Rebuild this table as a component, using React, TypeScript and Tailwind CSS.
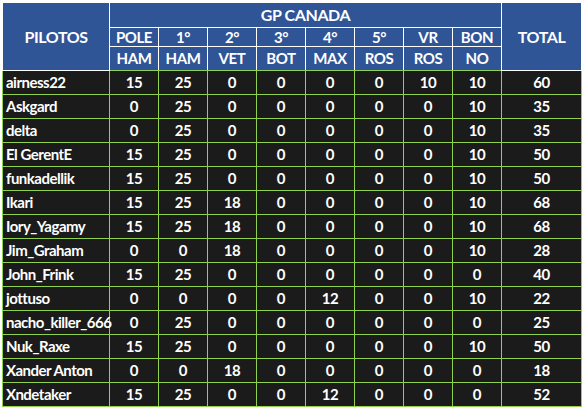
const subs = [
  ['POLE', 'HAM'],
  ['1°', 'HAM'],
  ['2°', 'VET'],
  ['3°', 'BOT'],
  ['4°', 'MAX'],
  ['5°', 'ROS'],
  ['VR', 'ROS'],
  ['BON', 'NO'],
]

const rows: [string, number[], number][] = [
  ['airness22', [15, 25, 0, 0, 0, 0, 10, 10], 60],
  ['Askgard', [0, 25, 0, 0, 0, 0, 0, 10], 35],
  ['delta', [0, 25, 0, 0, 0, 0, 0, 10], 35],
  ['El GerentE', [15, 25, 0, 0, 0, 0, 0, 10], 50],
  ['funkadellik', [15, 25, 0, 0, 0, 0, 0, 10], 50],
  ['Ikari', [15, 25, 18, 0, 0, 0, 0, 10], 68],
  ['Iory_Yagamy', [15, 25, 18, 0, 0, 0, 0, 10], 68],
  ['Jim_Graham', [0, 0, 18, 0, 0, 0, 0, 10], 28],
  ['John_Frink', [15, 25, 0, 0, 0, 0, 0, 0], 40],
  ['jottuso', [0, 0, 0, 0, 12, 0, 0, 10], 22],
  ['nacho_killer_666', [0, 25, 0, 0, 0, 0, 0, 0], 25],
  ['Nuk_Raxe', [15, 25, 0, 0, 0, 0, 0, 10], 50],
  ['Xander Anton', [0, 0, 18, 0, 0, 0, 0, 0], 18],
  ['Xndetaker', [15, 25, 0, 0, 12, 0, 0, 0], 52],
]

export default function App() {
  return (
    <div className="w-[583px] h-[409px] bg-white pt-[2px] pl-[2px] font-['Lato',sans-serif] font-bold text-white overflow-hidden tracking-[-0.4px]">
      <table className="border-collapse table-fixed w-[580px]">
        <colgroup>
          <col className="w-[107px]" />
          {subs.map((_, i) => (
            <col key={i} className="w-[49px]" />
          ))}
          <col className="w-[80px]" />
        </colgroup>
        <thead className="bg-[#2f5597]">
          <tr className="h-[25px]">
            <th rowSpan={3} className="border border-white text-[16px] leading-none">PILOTOS</th>
            <th colSpan={8} className="border border-white text-[16px] leading-none">GP CANADA</th>
            <th rowSpan={3} className="border border-white text-[16px] leading-none">TOTAL</th>
          </tr>
          <tr className="h-[19px]">
            {subs.map(([a]) => (
              <th key={a + 'a'} className="border border-white text-[15px] leading-none p-0">{a}</th>
            ))}
          </tr>
          <tr className="h-[24px]">
            {subs.map(([a, b]) => (
              <th key={a + b} className="border border-white border-b-[#92d050] text-[15px] leading-none p-0">{b}</th>
            ))}
          </tr>
        </thead>
        <tbody className="bg-[#1b1b1b]">
          {rows.map(([name, vals, total]) => (
            <tr key={name} className="h-[24px]">
              <td className="border border-[#92d050] text-[15px] leading-none pl-[3px] tracking-[-0.5px] whitespace-nowrap">{name}</td>
              {vals.map((v, i) => (
                <td key={i} className="border border-[#92d050] text-[15px] leading-none text-center">{v}</td>
              ))}
              <td className="border border-[#92d050] text-[15px] leading-none text-center">{total}</td>
            </tr>
          ))}
        </tbody>
      </table>
    </div>
  )
}
